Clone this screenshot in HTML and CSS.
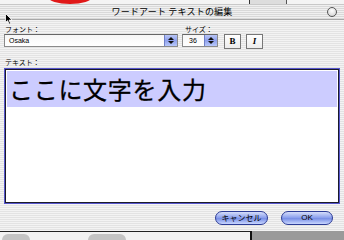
FILE: index.html
```html
<!DOCTYPE html>
<html lang="ja">
<head>
  <meta charset="UTF-8">
  <title>ワードアート テキストの編集</title>
  <link rel="stylesheet" href="styles.css">
</head>
<body>
<div class="desk">
  <div class="blob"></div>
  <div class="desk-box"></div>

  <div class="window">
    <div class="titlebar">
      <span class="title">ワードアート テキストの編集</span>
      <span class="close"></span>
    </div>

    <div class="content">
      <div class="top-row">
        <div class="field font-field">
          <label>フォント：</label>
          <div class="popup">
            <span>Osaka</span>
            <span class="stepper"><i class="up"></i><i class="down"></i></span>
          </div>
        </div>
        <div class="field size-field">
          <label>サイズ：</label>
          <div class="popup size">
            <span>36</span>
            <span class="stepper"><i class="up"></i><i class="down"></i></span>
          </div>
        </div>
        <button class="style-btn bold">B</button>
        <button class="style-btn italic">I</button>
      </div>

      <label class="text-label">テキスト：</label>
      <div class="textbox">
        <div class="selected">ここに文字を入力</div>
      </div>

      <div class="actions">
        <button class="pill">キャンセル</button>
        <button class="pill ok">OK</button>
      </div>
    </div>
  </div>

  <div class="desk-bottom">
    <div class="shape s1"></div>
    <div class="shape s2"></div>
    <div class="dark-panel"></div>
  </div>

  <svg class="cursor" width="8" height="12" viewBox="0 0 8 12">
    <path d="M0.5 0.5 L0.5 9.5 L2.6 7.6 L4.2 11.2 L5.6 10.6 L4.1 7.1 L7 7 Z" fill="#000" stroke="#fff" stroke-width="0.8"/>
  </svg>
</div>
</body>
</html>
```

FILE: styles.css
```css
body {
  margin: 0;
  font-family: "Noto Sans CJK JP", "Liberation Sans", sans-serif;
  color: #000;
}
.desk {
  position: relative;
  width: 344px;
  height: 240px;
  overflow: hidden;
  background: #f4f4f4;
}
.blob {
  position: absolute;
  left: 48px;
  top: -10px;
  width: 44px;
  height: 14px;
  border-radius: 50%;
  background: #e01818;
}
.desk-box {
  position: absolute;
  left: 249px;
  top: 0;
  width: 36px;
  height: 4px;
  border-left: 1px solid #333;
  border-right: 1px solid #555;
  background: #ddd;
}
.cursor {
  position: absolute;
  left: 5px;
  top: 13px;
}
.window {
  position: relative;
  margin-top: 4px;
  width: 344px;
  height: 227px;
  display: flex;
  flex-direction: column;
  background: repeating-linear-gradient(#f3f3f3 0 1px, #e3e3e3 1px 2px);
}
.titlebar {
  height: 14px;
  display: flex;
  align-items: center;
  justify-content: center;
  position: relative;
  background: repeating-linear-gradient(#f0f0f0 0 1px, #d9d9d9 1px 2px);
  border-top: 1px solid #c8c8c8;
  border-bottom: 1px solid #a8a8a8;
}
.title {
  font-size: 9px;
  line-height: 12px;
  letter-spacing: 0.2px;
}
.close {
  position: absolute;
  right: 7px;
  top: 2px;
  width: 8px;
  height: 8px;
  border: 1px solid #555;
  border-radius: 50%;
  background: radial-gradient(circle at 50% 35%, #fff, #ccc);
}
.content {
  flex: 1;
  display: flex;
  flex-direction: column;
  padding: 4px 0 0 4px;
}
label {
  font-size: 7px;
  line-height: 10px;
  display: block;
  padding-left: 1px;
}
.top-row {
  display: flex;
  align-items: flex-end;
  gap: 4px;
}
.field {
  display: flex;
  flex-direction: column;
}
.size-field label {
  padding-left: 3px;
}
.popup {
  display: flex;
  align-items: center;
  justify-content: space-between;
  width: 168px;
  height: 11px;
  border: 1px solid #8a8a8a;
  border-top-color: #666;
  background: linear-gradient(#f6f6f6, #ffffff);
  font-family: "Liberation Sans", sans-serif;
  font-size: 7px;
  padding-left: 4px;
}
.popup.size {
  width: 28px;
  padding-left: 6px;
}
.stepper {
  width: 12px;
  height: 11px;
  display: flex;
  flex-direction: column;
  align-items: center;
  justify-content: center;
  gap: 1px;
  background: linear-gradient(#b9c6f5, #8ea0ec 50%, #b8c8fa);
  border-left: 1px solid #7080c8;
}
.stepper i {
  display: block;
  width: 0;
  height: 0;
  border-left: 3px solid transparent;
  border-right: 3px solid transparent;
}
.stepper .up { border-bottom: 3px solid #111; }
.stepper .down { border-top: 3px solid #111; }
.style-btn {
  width: 17px;
  height: 15px;
  padding: 0;
  margin-left: 2px;
  margin-bottom: -2px;
  border: 1px solid #777;
  background: linear-gradient(#ffffff, #ececec);
  font-family: "Liberation Serif", serif;
  font-size: 9px;
  font-weight: bold;
  line-height: 13px;
}
.italic {
  margin-left: 1px;
  font-style: italic;
}
.text-label {
  margin-top: 10px;
}
.textbox {
  height: 132px;
  margin: 2px 5px 0 1px;
  background: #fff;
  border: 1px solid #1a1a2a;
  box-shadow: 0 0 0 1px #5656cc;
}
.selected {
  background: #ccccff;
  height: 36px;
  margin: 1px 1px 0;
  padding-left: 2px;
  font-size: 24px;
  line-height: 36px;
  letter-spacing: 0.7px;
  -webkit-text-stroke: 0.3px #000;
}
.actions {
  display: flex;
  justify-content: flex-end;
  gap: 13px;
  padding: 8px 11px 0 0;
}
.pill {
  width: 53px;
  height: 14px;
  padding: 0;
  border: 1px solid #2c3c96;
  border-radius: 7px;
  background: linear-gradient(#d6defa, #8fa3ee 45%, #7a90e6 55%, #c8d6ff);
  font-family: "Noto Sans CJK JP", "Liberation Sans", sans-serif;
  font-size: 8px;
  line-height: 12px;
  color: #000;
}
.pill.ok {
  width: 52px;
  font-family: "Liberation Sans", sans-serif;
}
.desk-bottom {
  position: relative;
  height: 9px;
  border-top: 1px solid #222;
  background: #f2f2f2;
}
.shape {
  position: absolute;
  top: 2px;
  height: 7px;
  background: #c4c4c4;
  border-radius: 6px 6px 0 0;
}
.s1 { left: 2px; width: 28px; }
.s2 { left: 88px; width: 38px; }
.dark-panel {
  position: absolute;
  left: 250px;
  top: -1px;
  right: 0;
  bottom: 0;
  border-left: 2px solid #111;
  background: #9a9a9a;
}
```
